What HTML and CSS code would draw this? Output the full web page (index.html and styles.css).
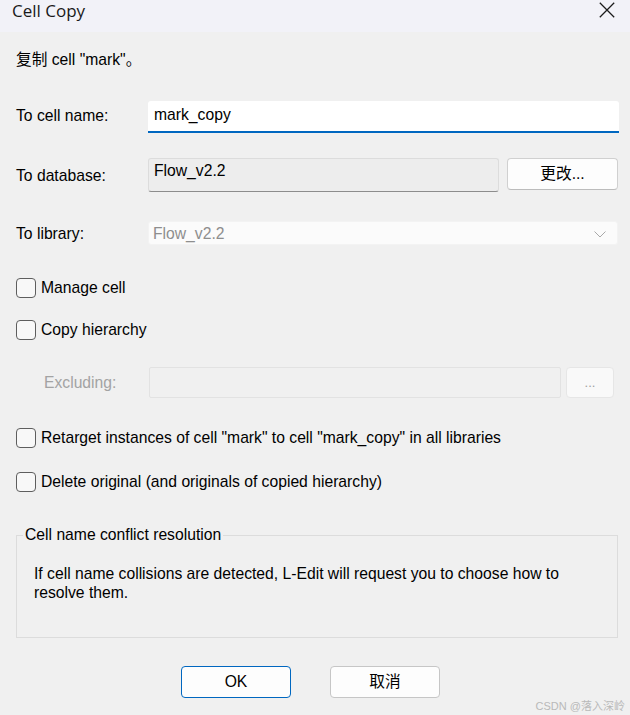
FILE: index.html
```html
<!DOCTYPE html>
<html lang="zh-CN">
<head>
<meta charset="utf-8">
<title>Cell Copy</title>
<link rel="stylesheet" href="styles.css">
</head>
<body>
<div class="dialog">
  <div class="titlebar">
    <span class="title">Cell Copy</span>
    <svg class="close" width="16" height="16" viewBox="0 0 16 16"><path d="M0.8 0.8L15.2 15.2M15.2 0.8L0.8 15.2" stroke="#1b1b1b" stroke-width="1.25" fill="none"/></svg>
  </div>
  <div class="content">
    <p class="intro">复制 cell "mark"。</p>

    <div class="row row-name">
      <span class="label">To cell name:</span>
      <div class="field field-edit">mark_copy</div>
    </div>

    <div class="row row-db">
      <span class="label label-db">To database:</span>
      <div class="field field-ro">Flow_v2.2</div>
      <button class="btn btn-change">更改...</button>
    </div>

    <div class="row row-lib">
      <span class="label label-lib">To library:</span>
      <div class="field combo"><span>Flow_v2.2</span><svg class="chev" width="12" height="7" viewBox="0 0 12 7"><path d="M0.5 0.5L6 6L11.5 0.5" stroke="#a8a8a8" stroke-width="1" fill="none"/></svg></div>
    </div>

    <label class="check check-manage"><span class="box"></span>Manage cell</label>
    <label class="check check-copy"><span class="box"></span>Copy hierarchy</label>

    <div class="row row-excl">
      <span class="label label-excl">Excluding:</span>
      <div class="field field-disabled"></div>
      <button class="btn btn-dots">...</button>
    </div>

    <label class="check check-retarget"><span class="box"></span>Retarget instances of cell "mark" to cell "mark_copy" in all libraries</label>
    <label class="check check-delete"><span class="box"></span>Delete original (and originals of copied hierarchy)</label>

    <fieldset class="group">
      <legend>Cell name conflict resolution</legend>
      <p class="group-text">If cell name collisions are detected, L-Edit will request you to choose how to<br>resolve them.</p>
    </fieldset>

    <div class="actions">
      <button class="btn btn-ok">OK</button>
      <button class="btn btn-cancel">取消</button>
    </div>
  </div>
  <div class="watermark">CSDN @落入深岭</div>
</div>
</body>
</html>
```

FILE: styles.css
```css
* { box-sizing: border-box; }

html, body {
  margin: 0;
  padding: 0;
}

body {
  width: 630px;
  height: 715px;
  overflow: hidden;
  background: #f0f0f0;
  font-family: "Liberation Sans", Arial, "Noto Sans CJK SC", sans-serif;
  font-size: 15.7px;
  line-height: 20px;
  color: #000;
}

.dialog {
  position: relative;
  width: 630px;
  height: 715px;
}

.titlebar {
  height: 32px;
  background: #f2f2f8;
  display: flex;
  justify-content: space-between;
  align-items: flex-start;
  padding: 0 15px 0 12px;
}

.title {
  font-family: "Open Sans", "Noto Sans", sans-serif;
  font-size: 17px;
  line-height: 21px;
  color: #1a1a1a;
}

.close {
  margin-top: 2px;
}

.content {
  padding: 0 11px 0 16px;
}

.intro {
  margin: 18px 0 0;
}

.row {
  display: flex;
  align-items: flex-start;
}

.label {
  width: 132px;
  flex: none;
  padding-top: 5px;
}

.field {
  height: 32px;
  padding: 4px 6px;
  white-space: nowrap;
}

.row-name { margin-top: 31px; }

.field-edit {
  flex: 1;
  background: #fff;
  border-bottom: 2px solid #0067c0;
  border-radius: 3px 3px 0 0;
}

.row-db { margin-top: 25px; }

.label-db { padding-top: 8px; }

.field-ro {
  width: 351px;
  height: 34px;
  padding: 2px 5px;
  background: #ededed;
  border: 1px solid #dcdcdc;
  border-bottom-color: #8d8d8d;
  border-radius: 3px;
}

.btn {
  font-family: "Liberation Sans", Arial, "Noto Sans CJK SC", sans-serif;
  font-size: 15.7px;
  line-height: 20px;
  color: #000;
  background: #fdfdfd;
  border: 1px solid #d0d0d0;
  border-radius: 4px;
  padding: 0;
  height: 32px;
}

.btn-change {
  width: 111px;
  margin-left: 8px;
  border-bottom-color: #bcbcbc;
}

.row-lib { margin-top: 29px; }

.label-lib { padding-top: 3px; }

.combo {
  width: 470px;
  height: 24px;
  padding: 2px 4px;
  background: #fbfbfb;
  border: 1px solid #f3f3f3;
  border-radius: 3px;
  color: #8e8e8e;
  display: flex;
  justify-content: space-between;
  align-items: flex-start;
}

.chev {
  margin: 7px 7px 0 0;
}

.check {
  display: flex;
  align-items: center;
  gap: 5px;
  height: 20px;
}

.box {
  width: 20px;
  height: 20px;
  flex: none;
  border: 1px solid #5e5e5e;
  border-radius: 4px;
  background: #f8f8f8;
}

.check-manage { margin-top: 33px; }
.check-copy { margin-top: 22px; }

.row-excl { margin-top: 27px; }

.label-excl {
  width: 105px;
  margin-left: 28px;
  color: #a3a3a3;
  padding-top: 6px;
}

.field-disabled {
  width: 412px;
  height: 31px;
  background: #f0f0f0;
  border: 1px solid #e2e2e2;
  border-radius: 2px;
}

.btn-dots {
  width: 48px;
  height: 31px;
  margin-left: 5px;
  background: #f9f9f9;
  border-color: #e6e6e6;
  color: #a0a0a0;
  font-size: 13px;
}

.check-retarget { margin-top: 30px; }
.check-delete { margin-top: 24px; }

.group {
  margin: 33px 1px 0 0;
  padding: 19px 6px 35px;
  border: 1px solid #dcdcdc;
  min-width: 0;
}

.group legend {
  padding: 0 2px;
  line-height: 20px;
}

.group-text {
  margin: 0 0 0 11px;
  line-height: 19px;
}

.actions {
  margin-top: 28px;
  padding-left: 165px;
  display: flex;
  gap: 39px;
}

.btn-ok {
  width: 110px;
  background: #fdfdfd;
  border-color: #0067c0;
}

.btn-cancel {
  width: 110px;
  border-color: #c6c6c6;
}

.watermark {
  position: absolute;
  right: 5px;
  bottom: 2px;
  font-size: 11px;
  line-height: 14px;
  color: #b9b9b9;
}
```
